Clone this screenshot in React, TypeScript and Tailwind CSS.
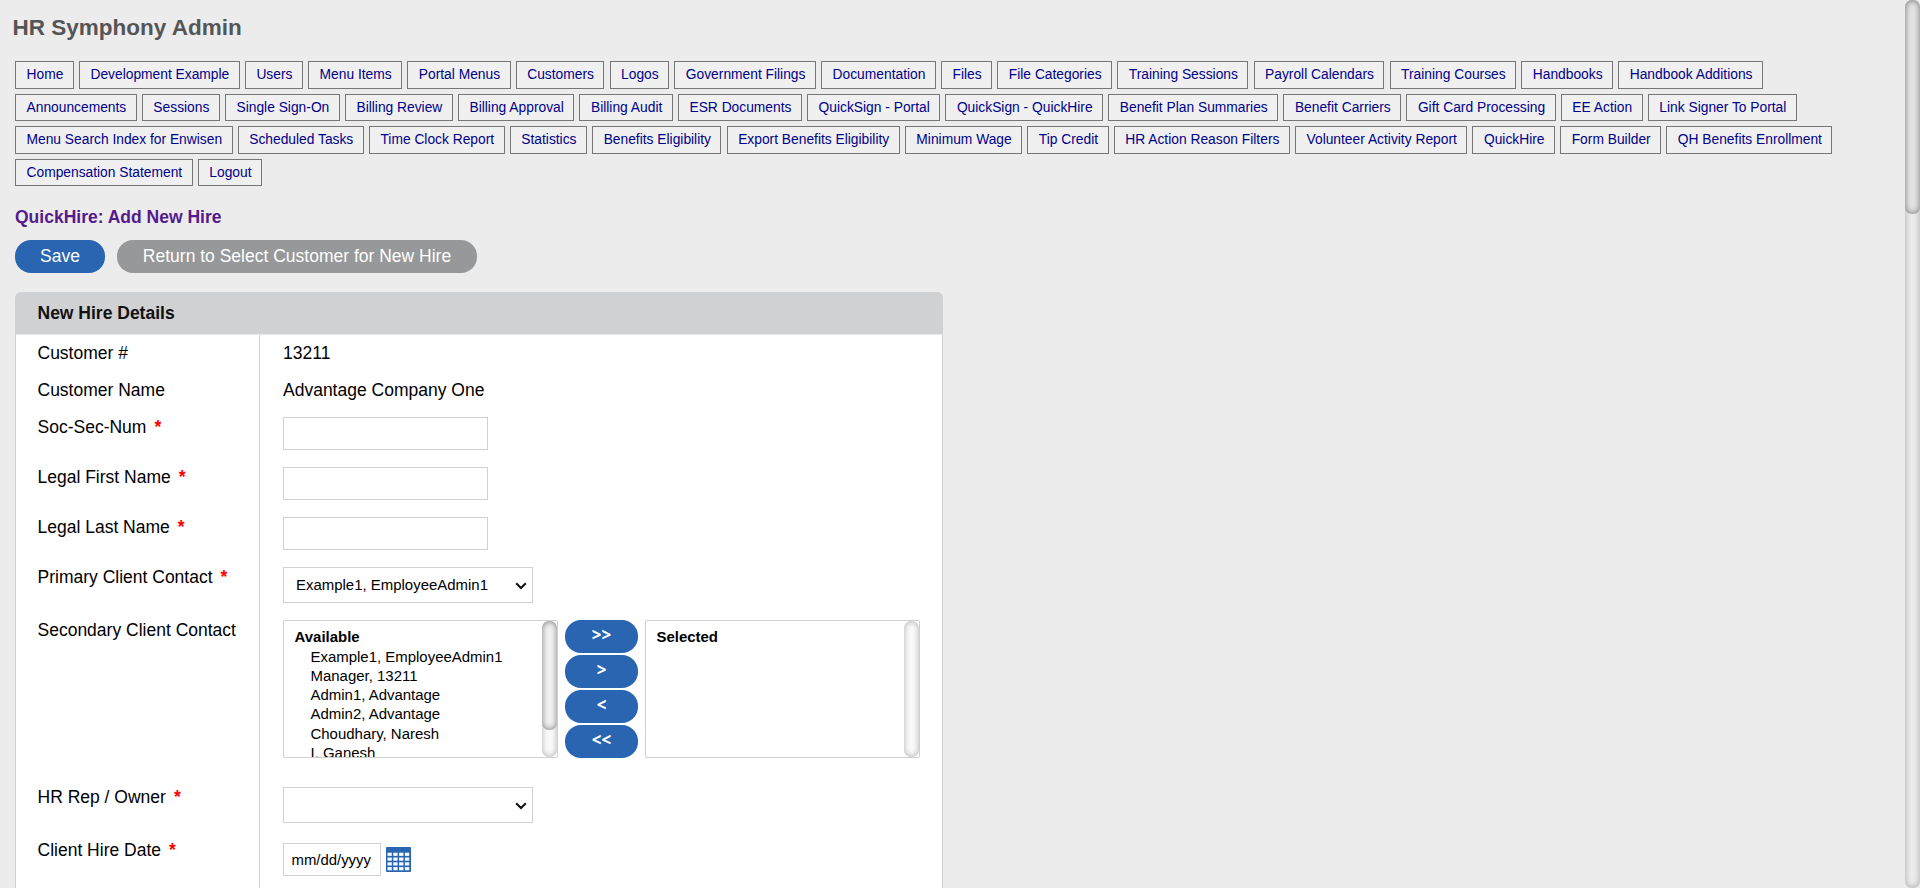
import React from "react";

const navItems = [
  "Home", "Development Example", "Users", "Menu Items", "Portal Menus", "Customers", "Logos",
  "Government Filings", "Documentation", "Files", "File Categories", "Training Sessions",
  "Payroll Calendars", "Training Courses", "Handbooks", "Handbook Additions", "Announcements",
  "Sessions", "Single Sign-On", "Billing Review", "Billing Approval", "Billing Audit",
  "ESR Documents", "QuickSign - Portal", "QuickSign - QuickHire", "Benefit Plan Summaries",
  "Benefit Carriers", "Gift Card Processing", "EE Action", "Link Signer To Portal",
  "Menu Search Index for Enwisen", "Scheduled Tasks", "Time Clock Report", "Statistics",
  "Benefits Eligibility", "Export Benefits Eligibility", "Minimum Wage", "Tip Credit",
  "HR Action Reason Filters", "Volunteer Activity Report", "QuickHire", "Form Builder",
  "QH Benefits Enrollment", "Compensation Statement", "Logout",
];

const available = [
  "Example1, EmployeeAdmin1", "Manager, 13211", "Admin1, Advantage", "Admin2, Advantage",
  "Choudhary, Naresh", "I, Ganesh",
];

function Row({ label, required, height, children }: {
  label: string; required?: boolean; height: string; children?: React.ReactNode;
}) {
  return (
    <div className={`flex shrink-0 ${height}`}>
      <div className="w-[244px] shrink-0 border-r border-[#d0d0d0] pt-[8px] pl-[21.5px] leading-5 whitespace-nowrap">
        {label}
        {required && <span className="ml-[8px] font-bold text-[#ff0000]">*</span>}
      </div>
      <div className="pt-[8px] pl-[23px] leading-5">{children}</div>
    </div>
  );
}

function TextInput() {
  return <input className="block h-[33px] w-[205px] border border-[#d0d0d0] bg-white px-2 outline-none" />;
}

function SelectBox({ value }: { value: string }) {
  return (
    <div className="flex h-9 w-[250px] items-center justify-between border border-[#d0d0d0] bg-white pr-[5px] pl-3 text-[14.96px]">
      <span>{value}</span>
      <svg className="relative top-px" width="12" height="8" viewBox="0 0 12 8" fill="none">
        <path d="M1.2 1.2 6 6l4.8-4.8" stroke="#111" strokeWidth="2" />
      </svg>
    </div>
  );
}

function ListBox({ title, items, thumb }: { title: string; items: string[]; thumb?: boolean }) {
  return (
    <div className="flex h-[138px] w-[275px] justify-between overflow-hidden rounded-[2px] border border-[#d0d0d0] bg-white text-[14.96px]">
      <div className="h-[136px] overflow-hidden pt-[6px] pl-[10.5px] leading-[19.2px]">
        <div className="h-[19.4px] leading-5 font-bold">{title}</div>
        {items.map((item) => (
          <div key={item} className="pl-[16px]">{item}</div>
        ))}
      </div>
      <div className="h-[136px] w-[15px] rounded-[7px] bg-[#fafafa] shadow-[inset_0_0_6px_rgba(0,0,0,0.3)]">
        {thumb && <div className="h-[109px] w-[15px] rounded-[7px] bg-[#f2f2f2] shadow-[inset_0_0_6px_rgba(0,0,0,0.5)]" />}
      </div>
    </div>
  );
}

function CalendarIcon() {
  return (
    <svg width="25" height="25" viewBox="0 0 25 25">
      <rect width="25" height="25" rx="1" fill="#2965b1" />
      {[0, 1, 2, 3].map((r) =>
        [0, 1, 2, 3].map((c) => (
          <rect key={`${r}-${c}`} x={1.5 + c * 5.8} y={5.7 + r * 4.8} width="4.3" height="3.2" fill="#f6f9fd" />
        ))
      )}
    </svg>
  );
}

export default function App() {
  return (
    <div className="flex h-[888px] w-[1920px] overflow-hidden bg-[#ececec] font-['Liberation_Sans',Arial,sans-serif] text-[17.5px] text-black">
      <main className="flex w-[1905px] shrink-0 flex-col">
        <h1 className="mt-[14px] ml-[12.5px] h-[27px] text-[22.5px] leading-[27px] font-bold text-[#555]">HR Symphony Admin</h1>
        <nav className="mt-5 ml-[15px] flex w-[1870px] flex-wrap gap-x-[5.15px] gap-y-[5px]">
          {navItems.map((item) => (
            <a key={item} className="box-border h-[27.6px] border border-[#767676] bg-[#f0f0f0] pt-[4px] pr-[9.5px] pl-[10.5px] text-[13.8px] leading-[18px] whitespace-nowrap text-[#00008b]">
              {item}
            </a>
          ))}
        </nav>
        <h2 className="mt-[21px] ml-[15px] h-5 text-[17.5px] leading-5 font-bold text-[#551a8b]">QuickHire: Add New Hire</h2>
        <div className="mt-[13px] ml-[15px] flex gap-3 text-white">
          <button className="h-[33px] w-[90px] rounded-[16px] bg-[#2965b1] pb-[2px]">Save</button>
          <button className="h-[33px] w-[360px] rounded-[16px] bg-[#969899] pb-[2px]">Return to Select Customer for New Hire</button>
        </div>
        <section className="mt-[19px] ml-[15px] flex h-[700px] w-[928px] shrink-0 flex-col">
          <div className="flex h-[42px] shrink-0 items-center rounded-t-[6px] bg-[#d0d1d3] pl-[22.5px] font-bold text-[#111]">New Hire Details</div>
          <div className="flex grow flex-col border border-[#d0d0d0] border-t-[#e8e8e8] bg-white">
            <Row label="Customer #" height="h-[37px]">13211</Row>
            <Row label="Customer Name" height="h-[37px]">Advantage Company One</Row>
            <Row label="Soc-Sec-Num" required height="h-[50px]"><TextInput /></Row>
            <Row label="Legal First Name" required height="h-[50px]"><TextInput /></Row>
            <Row label="Legal Last Name" required height="h-[50px]"><TextInput /></Row>
            <Row label="Primary Client Contact" required height="h-[53px]"><SelectBox value="Example1, EmployeeAdmin1" /></Row>
            <Row label="Secondary Client Contact" height="h-[167px]">
              <div className="flex gap-[7px]">
                <ListBox title="Available" items={available} thumb />
                <div className="flex h-[138px] w-[73px] flex-col gap-[2.6px] text-white">
                  {[">>", ">", "<", "<<"].map((s) => (
                    <button key={s} className="h-[32.4px] w-[73px] shrink-0 rounded-[16px] bg-[#2965b1] pb-[4px] font-['Open_Sans',sans-serif] text-[17px] leading-none font-bold">{s}</button>
                  ))}
                </div>
                <ListBox title="Selected" items={[]} />
              </div>
            </Row>
            <Row label="HR Rep / Owner" required height="h-[53px]"><SelectBox value="" /></Row>
            <Row label="Client Hire Date" required height="h-[150px]">
              <div className="mt-[3px] flex items-center gap-[5px]">
                <input className="h-[33px] w-[98px] border border-[#d0d0d0] bg-white pl-[7.5px] text-[14.9px] outline-none" defaultValue="mm/dd/yyyy" />
                <CalendarIcon />
              </div>
            </Row>
          </div>
        </section>
      </main>
      <div className="h-[888px] w-[15px] shrink-0 rounded-[7px] bg-[#ececec] shadow-[inset_0_0_6px_rgba(0,0,0,0.3)]">
        <div className="h-[214px] w-[15px] rounded-[7px] bg-[#e4e4e4] shadow-[inset_0_0_6px_rgba(0,0,0,0.5)]" />
      </div>
    </div>
  );
}
